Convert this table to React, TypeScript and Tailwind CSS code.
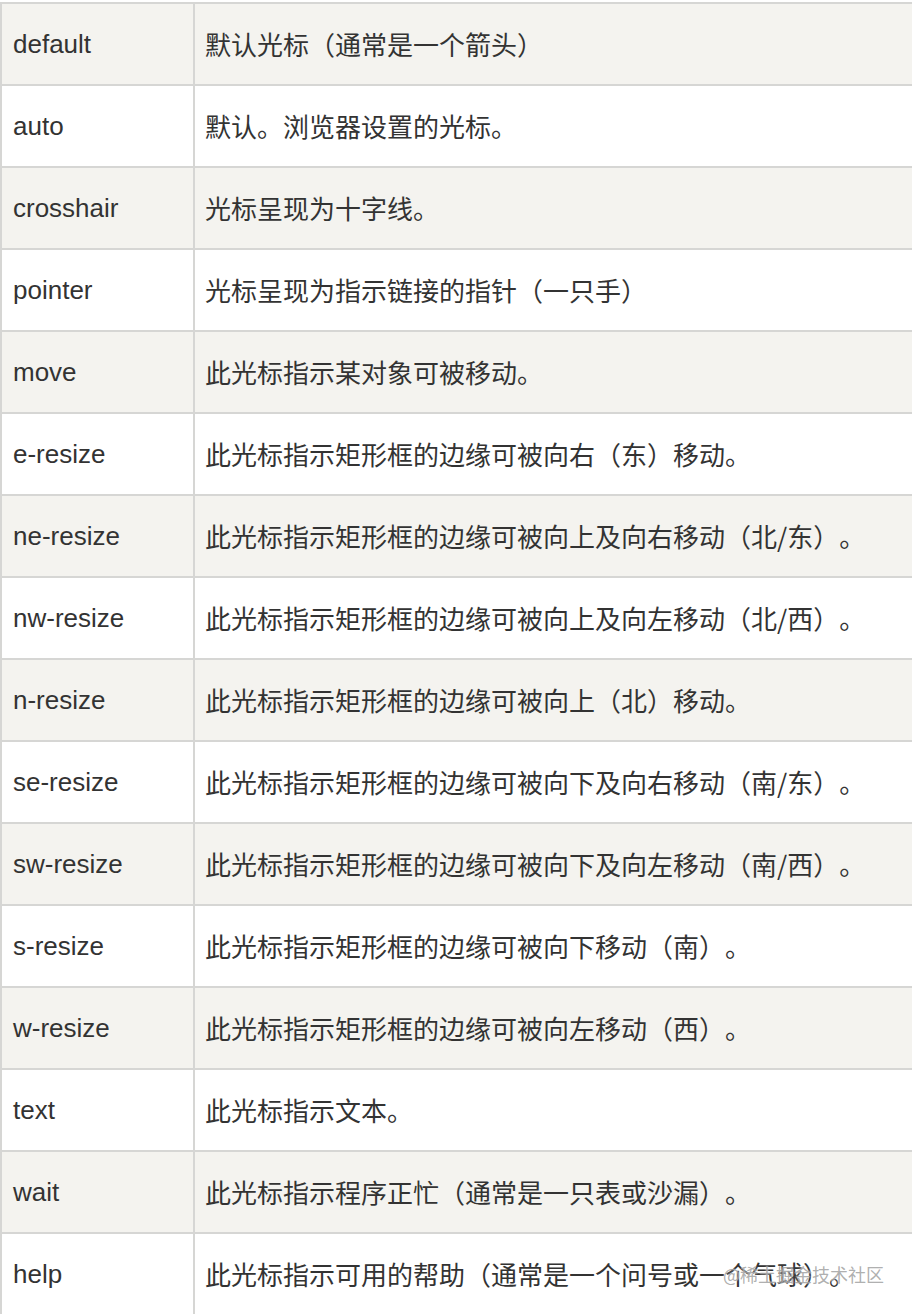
import React from "react";

const rows: [string, string][] = [
  ["default", "默认光标（通常是一个箭头）"],
  ["auto", "默认。浏览器设置的光标。"],
  ["crosshair", "光标呈现为十字线。"],
  ["pointer", "光标呈现为指示链接的指针（一只手）"],
  ["move", "此光标指示某对象可被移动。"],
  ["e-resize", "此光标指示矩形框的边缘可被向右（东）移动。"],
  ["ne-resize", "此光标指示矩形框的边缘可被向上及向右移动（北/东）。"],
  ["nw-resize", "此光标指示矩形框的边缘可被向上及向左移动（北/西）。"],
  ["n-resize", "此光标指示矩形框的边缘可被向上（北）移动。"],
  ["se-resize", "此光标指示矩形框的边缘可被向下及向右移动（南/东）。"],
  ["sw-resize", "此光标指示矩形框的边缘可被向下及向左移动（南/西）。"],
  ["s-resize", "此光标指示矩形框的边缘可被向下移动（南）。"],
  ["w-resize", "此光标指示矩形框的边缘可被向左移动（西）。"],
  ["text", "此光标指示文本。"],
  ["wait", "此光标指示程序正忙（通常是一只表或沙漏）。"],
  ["help", "此光标指示可用的帮助（通常是一个问号或一个气球）。"],
];

export default function App() {
  return (
    <div className="relative w-[912px] h-[1314px] overflow-hidden bg-white pt-[2px] text-[#333333]">
      <div className="border-l-2 border-t-2 border-[#d6d6d4]">
        {rows.map(([k, v], i) => (
          <div
            key={k}
            className={`flex h-[82px] border-b-2 border-[#d6d6d4] ${
              i % 2 === 0 ? "bg-[#f4f3ef]" : "bg-white"
            }`}
          >
            <div className="w-[193px] shrink-0 border-r-2 border-[#d6d6d4] pl-[11px] flex items-center text-[26px] leading-none font-['Liberation_Sans',_'Noto_Sans_CJK_SC',_sans-serif]">
              {k}
            </div>
            <div className="flex-1 pl-[10px] flex items-center text-[26px] leading-none font-['Noto_Sans_CJK_SC',_sans-serif] whitespace-nowrap [text-spacing-trim:space-all]">
              {v}
            </div>
          </div>
        ))}
      </div>
      <div className="absolute left-[723px] top-[1262px] text-[18px] leading-6 text-[#9a9a9a]/80 font-['Noto_Sans_CJK_SC',_sans-serif] whitespace-nowrap [text-spacing-trim:space-all] [text-shadow:0_0_2px_rgba(255,255,255,0.9)]">
        @稀土掘金技术社区
      </div>
    </div>
  );
}
